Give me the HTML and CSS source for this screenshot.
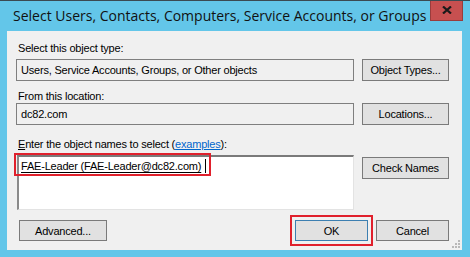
FILE: index.html
```html
<!DOCTYPE html>
<html lang="en">
<head>
  <meta charset="UTF-8">
  <title>Select Users, Contacts, Computers, Service Accounts, or Groups</title>
  <link rel="stylesheet" href="styles.css">
</head>
<body>
  <div class="window">
    <div class="titlebar">
      <span class="title">Select Users, Contacts, Computers, Service Accounts, or Groups</span>
      <button class="close" aria-label="Close">
        <svg width="10" height="8" viewBox="0 0 10 8"><path d="M1 0.5 L9 7.5 M9 0.5 L1 7.5" stroke="#1a1a1a" stroke-width="2.2"/></svg>
      </button>
    </div>

    <div class="client">
      <div class="label">Select this object type:</div>
      <div class="row">
        <div class="field">Users, Service Accounts, Groups, or Other objects</div>
        <button class="btn">Object Types...</button>
      </div>

      <div class="label label-2">From this location:</div>
      <div class="row row-2">
        <div class="field">dc82.com</div>
        <button class="btn">Locations...</button>
      </div>

      <div class="label label-3"><u>E</u>nter the object names to select (<a href="#">examples</a>):</div>
      <div class="row row-3">
        <div class="names">
          <span class="resolved">FAE-Leader (FAE-Leader@dc82.com)</span><span class="caret"></span>
          <div class="mark"></div>
        </div>
        <button class="btn">Check Names</button>
      </div>

      <div class="actions">
        <button class="btn btn-advanced">Advanced...</button>
        <button class="btn btn-default">OK</button>
        <button class="btn">Cancel</button>
      </div>

      <!-- size grip -->
      <svg class="grip" width="9" height="9" viewBox="0 0 9 9">
        <rect x="6" y="0" width="2" height="2" fill="#b8b8b8"/>
        <rect x="3" y="3" width="2" height="2" fill="#b8b8b8"/>
        <rect x="6" y="3" width="2" height="2" fill="#b8b8b8"/>
        <rect x="0" y="6" width="2" height="2" fill="#b8b8b8"/>
        <rect x="3" y="6" width="2" height="2" fill="#b8b8b8"/>
        <rect x="6" y="6" width="2" height="2" fill="#b8b8b8"/>
      </svg>
    </div>
  </div>
</body>
</html>
```

FILE: styles.css
```css
:root {
  --frame: #63c6e9;
  --client: #f0f0f0;
  --btn-bg: #e1e1e1;
  --btn-border: #7a7a7a;
  --field-border: #7f7f7f;
  --mark: #e0202c;
}

* {
  margin: 0;
  padding: 0;
  box-sizing: border-box;
}

body {
  background-color: var(--frame);
  font-family: "Liberation Sans", Arial, sans-serif;
  font-size: 11px;
  letter-spacing: -0.2px;
  color: #000;
}

.window {
  width: 470px;
  height: 257px;
  background-color: var(--frame);
  border-top: 1px solid #3b4a52;
  overflow: hidden;
}

/* Title bar */
.titlebar {
  display: flex;
  align-items: flex-start;
  height: 30px;
  padding-left: 13px;
}

.title {
  font-family: "Open Sans", "Noto Sans", sans-serif;
  font-size: 14px;
  letter-spacing: 0;
  line-height: 20px;
  margin-top: 5px;
  color: #111;
  white-space: nowrap;
}

.close {
  margin-left: auto;
  margin-right: 7px;
  margin-top: -1px;
  width: 33px;
  height: 21px;
  background-color: #c75050;
  border: 1px solid #9a3c3c;
  border-top: none;
  display: flex;
  align-items: center;
  justify-content: center;
}

/* Client area */
.client {
  position: relative;
  margin-left: 7px;
  width: 455px;
  height: 219px;
  background-color: var(--client);
  padding: 11px 13px 0 9px;
}

.label {
  line-height: 13px;
  height: 13px;
  padding-left: 2px;
  white-space: nowrap;
}

.label a {
  color: #0066cc;
}

.label-2 {
  margin-top: 9px;
}

.label-3 {
  margin-top: 13px;
}

.row {
  display: flex;
  gap: 8px;
  margin-top: 4px;
  align-items: center;
}

.row-2 {
  margin-top: 0;
}

.row-3 {
  margin-top: 4px;
  align-items: flex-start;
}

.field {
  width: 338px;
  height: 22px;
  border: 1px solid var(--field-border);
  background-color: var(--client);
  padding-left: 4px;
  line-height: 20px;
  white-space: nowrap;
}

.btn {
  font-family: "Liberation Sans", Arial, sans-serif;
  font-size: 11px;
  letter-spacing: -0.2px;
  color: #000;
  width: 87px;
  height: 22px;
  background-color: var(--btn-bg);
  border: 1px solid var(--btn-border);
}

.row-3 .btn {
  margin-top: 2px;
}

/* Names box */
.names {
  position: relative;
  width: 337px;
  margin-left: 1px;
  height: 55px;
  background-color: #fff;
  border-style: solid;
  border-width: 2px 1px 1px 2px;
  border-color: #7a7a7a #e3e3e3 #e3e3e3 #8a8a8a;
  padding: 2px 0 0 2px;
  line-height: 13px;
  white-space: nowrap;
}

.resolved {
  text-decoration: underline;
  text-underline-offset: 2px;
}

.caret {
  display: inline-block;
  width: 1px;
  height: 14px;
  margin-left: 4px;
  vertical-align: -3px;
  background-color: #000;
}

.mark {
  position: absolute;
  left: -5px;
  top: -4px;
  width: 197px;
  height: 23px;
  border: 2px solid var(--mark);
}

/* Bottom buttons */
.actions {
  display: flex;
  gap: 8px;
  margin-top: 10px;
  padding-left: 3px;
}

.btn-advanced {
  width: 88px;
  margin-right: auto;
}

.actions .btn {
  height: 21px;
}

.actions .btn:not(.btn-advanced) {
  width: 73px;
}

.btn-default {
  border-color: #3c7fb1;
  outline: 2px solid var(--mark);
  outline-offset: 3px;
}

.grip {
  position: absolute;
  right: 1px;
  bottom: 1px;
}
```
